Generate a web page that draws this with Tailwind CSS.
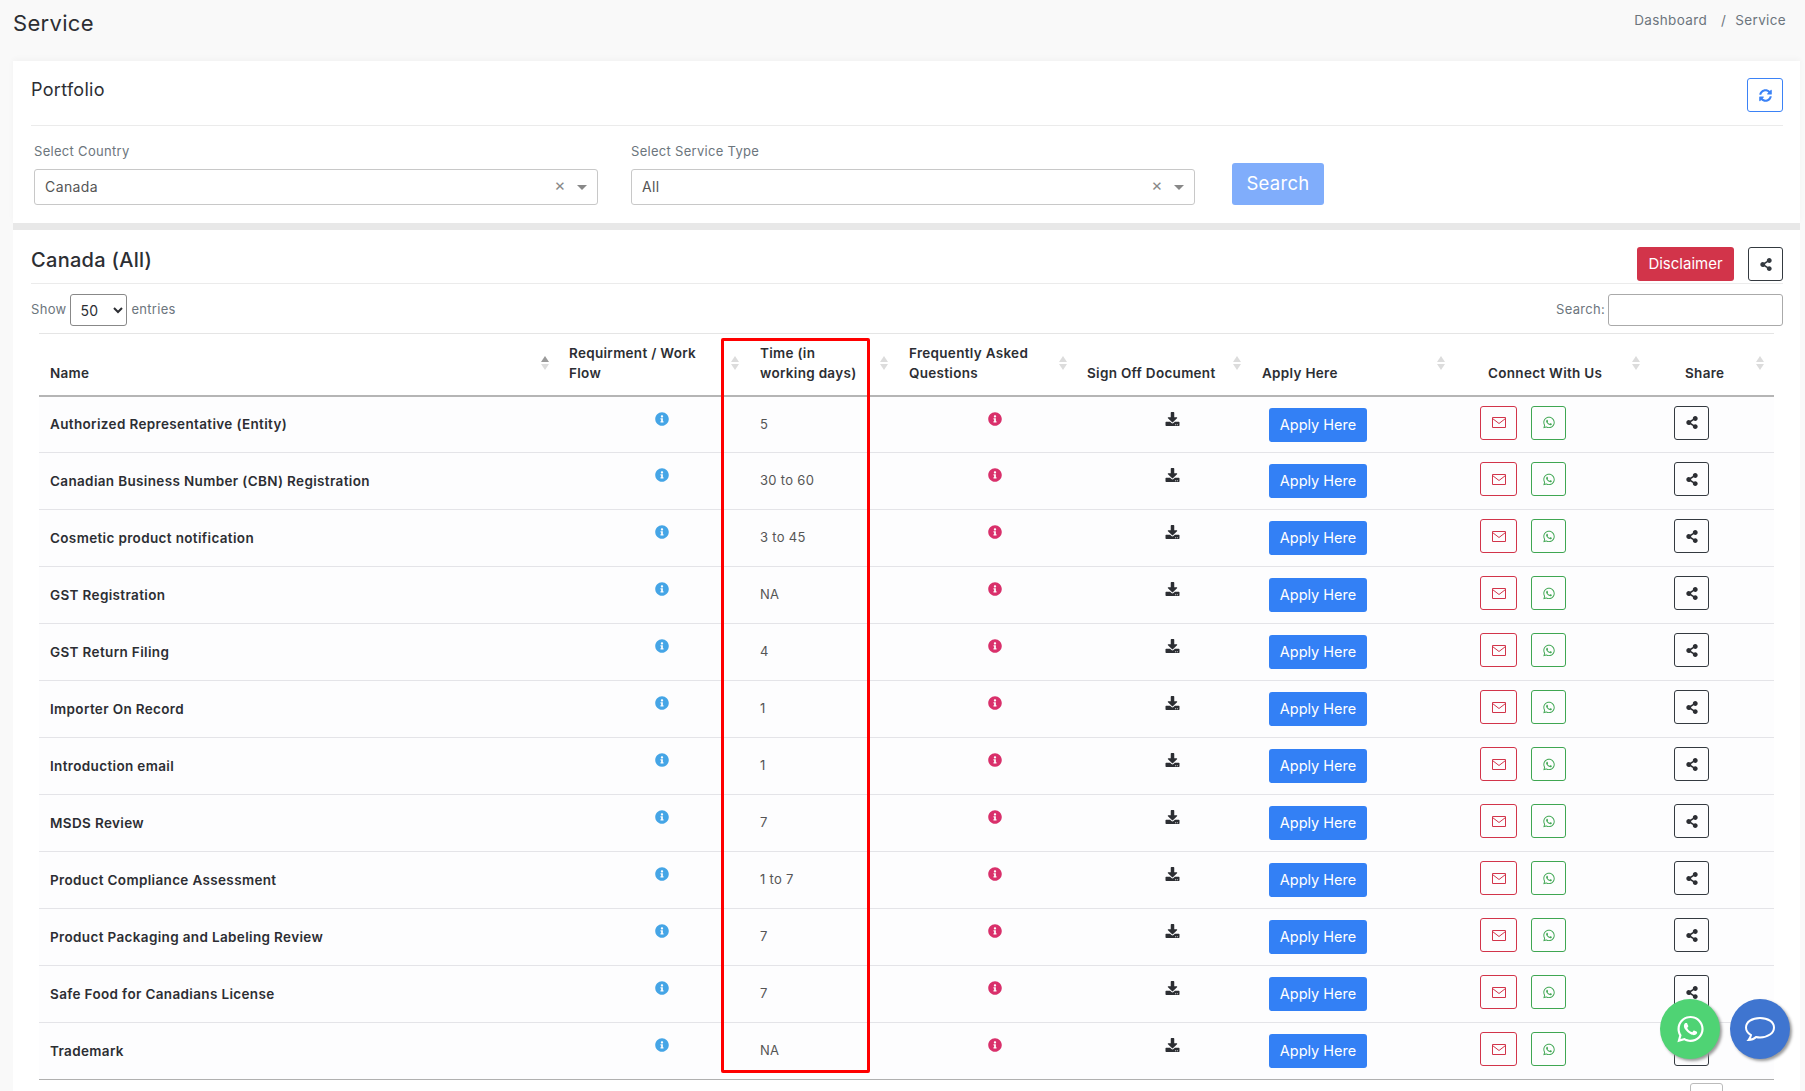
<!DOCTYPE html>
<html lang="en">
<head>
  <meta charset="UTF-8" />
  <title>Service</title>
  <script src="https://cdn.jsdelivr.net/npm/@tailwindcss/browser@4"></script>
</head>
<body class="bg-[#f9f9f9] h-screen overflow-hidden [font-family:Inter,sans-serif] text-[13px] tracking-[0.3px] text-[#2c2e33]">
  <div class="relative pl-[13px] pr-[5px] h-[1091px] overflow-hidden">

    <!-- page title -->
    <div class="flex justify-between h-[61px]">
      <h1 class="text-[22px] leading-[24px] pt-[11px] font-normal">Service</h1>
      <div class="flex pt-[11px] pr-[14px] leading-[18px] text-[13.5px] tracking-[0.35px] text-[#6c757d]">
        <span>Dashboard</span><span class="ml-[14px] mr-[9px]">/</span><span>Service</span>
      </div>
    </div>

    <!-- portfolio filter -->
    <section class="bg-white h-[162px] pl-[18px] pr-[17px] shadow-[0_-2px_6px_rgba(0,0,0,0.03)]">
      <div class="flex justify-between h-[65px] border-b border-[#ebebeb]">
        <h2 class="text-[18px] leading-[22px] pt-[18px]">Portfolio</h2>
        <button class="mt-[17px] w-[36px] h-[34px] border border-[#3b82f6] rounded-[3px] flex items-center justify-center">
          <svg class="w-[13px] h-[13px] fill-[#3b82f6]" viewBox="0 0 512 512"><path d="M370.72 133.28C339.458 104.008 298.888 87.962 255.848 88c-77.458.068-144.328 53.178-162.791 126.85-1.344 5.363-6.122 9.15-11.651 9.15H24.103c-7.498 0-13.194-6.807-11.807-14.176C33.933 94.924 134.813 8 256 8c66.448 0 126.791 26.136 171.315 68.685L463.03 40.97C478.149 25.851 504 36.559 504 57.941V192c0 13.255-10.745 24-24 24H345.941c-21.382 0-32.09-25.851-16.971-40.971l41.75-41.749zM32 296h134.059c21.382 0 32.09 25.851 16.971 40.971l-41.75 41.75c31.262 29.273 71.835 45.319 114.876 45.28 77.418-.07 144.315-53.144 162.787-126.849 1.344-5.363 6.122-9.15 11.651-9.15h57.304c7.498 0 13.194 6.807 11.807 14.176C478.067 417.076 377.187 504 256 504c-66.448 0-126.791-26.136-171.315-68.685L48.97 471.03C33.851 486.149 8 475.441 8 454.059V320c0-13.255 10.745-24 24-24z"/></svg>
        </button>
      </div>
      <div class="flex pl-[3px] pt-[16px]">
        <div class="w-[564px]">
          <label class="block leading-[18px] mb-[9px] text-[#6c757d]">Select Country</label>
          <div class="h-[36px] border border-[#c8c8c8] rounded-[3px] flex items-center pl-[10px] pr-[10px] pb-[2px] text-[14px] tracking-[0.4px] text-[#555]">
            <span class="flex-1">Canada</span>
            <span class="text-[17px] leading-[15px] text-[#888] mr-[11px] -mt-[2px]">×</span>
            <span class="w-0 h-0 mt-[2px] border-x-[5px] border-x-transparent border-t-[5px] border-t-[#888]"></span>
          </div>
        </div>
        <div class="w-[564px] ml-[33px]">
          <label class="block leading-[18px] mb-[9px] text-[#6c757d]">Select Service Type</label>
          <div class="h-[36px] border border-[#c8c8c8] rounded-[3px] flex items-center pl-[10px] pr-[10px] pb-[2px] text-[14px] tracking-[0.4px] text-[#555]">
            <span class="flex-1">All</span>
            <span class="text-[17px] leading-[15px] text-[#888] mr-[11px] -mt-[2px]">×</span>
            <span class="w-0 h-0 mt-[2px] border-x-[5px] border-x-transparent border-t-[5px] border-t-[#888]"></span>
          </div>
        </div>
        <button class="ml-[37px] mt-[21px] w-[92px] h-[42px] rounded-[3px] bg-[#80adfb] text-white text-[18.5px]">Search</button>
      </div>
    </section>

    <div class="h-[7px] bg-[#e8e8e8]"></div>

    <!-- results -->
    <section class="bg-white h-[900px] pl-[18px] pr-[17px]">
      <div class="flex justify-between h-[54px] border-b border-[#ebebeb]">
        <h2 class="text-[20px] leading-[24px] pt-[18px] font-medium">Canada (All)</h2>
        <div class="flex gap-[14px] pt-[17px]">
          <button class="w-[97px] h-[34px] rounded-[3px] bg-[#d2344a] text-white text-[15px] tracking-[0px]">Disclaimer</button>
          <button class="w-[35px] h-[34px] border border-[#343a40] rounded-[3px] flex items-center justify-center">
            <svg class="w-[12px] h-[13px] fill-[#343a40]" viewBox="0 0 448 512"><path d="M352 320c-22.608 0-43.387 7.819-59.79 20.895l-102.486-64.054a96.551 96.551 0 0 0 0-41.683l102.486-64.054C308.613 184.181 329.392 192 352 192c53.019 0 96-42.981 96-96S405.019 0 352 0s-96 42.981-96 96c0 7.158.79 14.13 2.276 20.841L155.79 180.895C139.387 167.819 118.608 160 96 160c-53.019 0-96 42.981-96 96s42.981 96 96 96c22.608 0 43.387-7.819 59.79-20.895l102.486 64.054A96.301 96.301 0 0 0 256 416c0 53.019 42.981 96 96 96s96-42.981 96-96-42.981-96-96-96z"/></svg>
          </button>
        </div>
      </div>

      <div class="flex justify-between items-start h-[49px] pt-[10px] text-[#6c757d]">
        <div class="flex items-center">
          <span>Show</span>
          <select class="ml-[4px] mr-[4px] w-[57px] h-[32px] border border-[#888] rounded-[3px] pl-[5px] text-[14px] text-[#2c2e33] bg-white"><option>50</option></select>
          <span>entries</span>
        </div>
        <div class="flex items-center">
          <span>Search:</span>
          <input class="ml-[3px] w-[175px] h-[32px] border border-[#aaa] rounded-[3px] bg-white" />
        </div>
      </div>

      <table class="ml-[8px] w-[1735px] table-fixed border-collapse border-t border-[#e5e5e5]">
        <colgroup>
          <col class="w-[520px]" /><col class="w-[190px]" /><col class="w-[149px]" /><col class="w-[179px]" />
          <col class="w-[174px]" /><col class="w-[204px]" /><col class="w-[195px]" /><col class="w-[124px]" />
        </colgroup>
        <thead>
          <tr class="h-[62px] border-b-2 border-[#b5b5b5] text-left text-[13.5px] leading-[20px] align-bottom">
            <th class="relative font-semibold pl-[11px] pb-[12px]">Name</th>
            <th class="relative font-semibold pl-[10px] pb-[12px]">Requirment / Work<br />Flow</th>
            <th class="relative font-semibold pl-[11px] pb-[12px]">Time (in<br />working days)</th>
            <th class="relative font-semibold pl-[11px] pb-[12px]">Frequently Asked<br />Questions</th>
            <th class="relative font-semibold pl-[10px] pb-[12px]">Sign Off Document</th>
            <th class="relative font-semibold pl-[11px] pb-[12px]">Apply Here</th>
            <th class="relative font-semibold pl-[33px] pb-[12px]">Connect With Us</th>
            <th class="relative font-semibold pl-[35px] pb-[12px]">Share</th>
          </tr>
        </thead>
        <tbody id="rows"></tbody>
      </table>

      <div class="flex justify-end mt-[3px] mr-[60px]">
        <div class="w-[33px] h-[30px] border border-[#bbb] rounded-[3px]"></div>
      </div>
    </section>

    <!-- red annotation round the time column -->
    <div class="absolute left-[721px] top-[338px] w-[149px] h-[735px] border-[3px] border-[#ff0000] rounded-[2px]"></div>

    <!-- floating buttons -->
    <div class="absolute left-[1660px] top-[999px] w-[60px] h-[60px] rounded-full bg-[#4fd374] shadow-[2px_2px_3px_#999] flex items-center justify-center">
      <svg class="w-[27px] h-[30px] fill-white" viewBox="0 0 448 512"><path d="M380.9 97.1C339 55.1 283.2 32 223.9 32c-122.4 0-222 99.6-222 222 0 39.1 10.2 77.3 29.6 111L0 480l117.7-30.9c32.4 17.7 68.9 27 106.1 27h.1c122.3 0 224.1-99.6 224.1-222 0-59.3-25.2-115-67.1-157zm-157 341.6c-33.2 0-65.7-8.9-94-25.7l-6.7-4-69.8 18.3L72 359.2l-4.4-7c-18.5-29.4-28.2-63.3-28.2-98.2 0-101.7 82.8-184.5 184.6-184.5 49.3 0 95.6 19.2 130.4 54.1 34.8 34.9 56.2 81.2 56.1 130.5 0 101.8-84.9 184.6-186.6 184.6zm101.2-138.2c-5.5-2.8-32.8-16.2-37.9-18-5.1-1.9-8.8-2.8-12.5 2.8-3.7 5.6-14.3 18-17.6 21.8-3.2 3.7-6.5 4.2-12 1.4-32.6-16.3-54-29.1-75.5-66-5.7-9.8 5.7-9.1 16.3-30.3 1.8-3.7.9-6.9-.5-9.7-1.4-2.8-12.5-30.1-17.1-41.2-4.5-10.8-9.1-9.3-12.5-9.5-3.2-.2-6.9-.2-10.6-.2-3.7 0-9.7 1.4-14.8 6.9-5.1 5.6-19.4 19-19.4 46.3 0 27.3 19.9 53.7 22.6 57.4 2.8 3.7 39.1 59.7 94.8 83.8 35.2 15.2 49 16.5 66.6 13.9 10.7-1.6 32.8-13.4 37.4-26.4 4.6-13 4.6-24.1 3.2-26.4-1.3-2.5-5-3.9-10.5-6.6z"/></svg>
    </div>
    <div class="absolute left-[1730px] top-[999px] w-[60px] h-[60px] rounded-full bg-[#3f75d0] shadow-[2px_2px_3px_#999] flex items-center justify-center">
      <svg class="w-[32px] h-[28px] fill-none stroke-white stroke-[2]" viewBox="0 0 32 28"><path d="M16 3C8 3 2 7 2 12.5c0 3 2 5.800 5 7.500-.300 2-1.300 3.500-2.500 5 3 0 5.500-1 7.500-3 1.300.300 2.700.500 4 .500 8 0 14-4.500 14-10S24 3 16 3z"/></svg>
    </div>
  </div>

  <script>
    const services = [
      ['Authorized Representative (Entity)', '5'],
      ['Canadian Business Number (CBN) Registration', '30 to 60'],
      ['Cosmetic product notification', '3 to 45'],
      ['GST Registration', 'NA'],
      ['GST Return Filing', '4'],
      ['Importer On Record', '1'],
      ['Introduction email', '1'],
      ['MSDS Review', '7'],
      ['Product Compliance Assessment', '1 to 7'],
      ['Product Packaging and Labeling Review', '7'],
      ['Safe Food for Canadians License', '7'],
      ['Trademark', 'NA']
    ];

    const infoPath = 'M256 8C119.043 8 8 119.083 8 256c0 136.997 111.043 248 248 248s248-111.003 248-248C504 119.083 392.957 8 256 8zm0 110c23.196 0 42 18.804 42 42s-18.804 42-42 42-42-18.804-42-42 18.804-42 42-42zm56 254c0 6.627-5.373 12-12 12h-88c-6.627 0-12-5.373-12-12v-24c0-6.627 5.373-12 12-12h12v-64h-12c-6.627 0-12-5.373-12-12v-24c0-6.627 5.373-12 12-12h64c6.627 0 12 5.373 12 12v100h12c6.627 0 12 5.373 12 12v24z';
    const downloadPath = 'M216 0h80c13.3 0 24 10.7 24 24v168h87.7c17.8 0 26.7 21.5 14.1 34.1L269.7 378.3c-7.5 7.5-19.8 7.5-27.3 0L90.1 226.1c-12.6-12.6-3.7-34.1 14.1-34.1H192V24c0-13.3 10.7-24 24-24zm296 376v112c0 13.3-10.7 24-24 24H24c-13.3 0-24-10.7-24-24V376c0-13.3 10.7-24 24-24h146.7l49 49c20.1 20.1 52.5 20.1 72.6 0l49-49H488c13.3 0 24 10.7 24 24zm-124 88c0-11-9-20-20-20s-20 9-20 20 9 20 20 20 20-9 20-20zm64 0c0-11-9-20-20-20s-20 9-20 20 9 20 20 20 20-9 20-20z';
    const sharePath = 'M352 320c-22.608 0-43.387 7.819-59.79 20.895l-102.486-64.054a96.551 96.551 0 0 0 0-41.683l102.486-64.054C308.613 184.181 329.392 192 352 192c53.019 0 96-42.981 96-96S405.019 0 352 0s-96 42.981-96 96c0 7.158.79 14.13 2.276 20.841L155.79 180.895C139.387 167.819 118.608 160 96 160c-53.019 0-96 42.981-96 96s42.981 96 96 96c22.608 0 43.387-7.819 59.79-20.895l102.486 64.054A96.301 96.301 0 0 0 256 416c0 53.019 42.981 96 96 96s96-42.981 96-96-42.981-96-96-96z';
    const waPath = 'M380.9 97.1C339 55.1 283.2 32 223.9 32c-122.4 0-222 99.6-222 222 0 39.1 10.2 77.3 29.6 111L0 480l117.7-30.9c32.4 17.7 68.9 27 106.1 27h.1c122.3 0 224.1-99.6 224.1-222 0-59.3-25.2-115-67.1-157zm-157 341.6c-33.2 0-65.7-8.9-94-25.7l-6.7-4-69.8 18.3L72 359.2l-4.4-7c-18.5-29.4-28.2-63.3-28.2-98.2 0-101.7 82.8-184.5 184.6-184.5 49.3 0 95.6 19.2 130.4 54.1 34.8 34.9 56.2 81.2 56.1 130.5 0 101.8-84.9 184.6-186.6 184.6zm101.2-138.2c-5.5-2.8-32.8-16.2-37.9-18-5.1-1.9-8.8-2.8-12.5 2.8-3.7 5.6-14.3 18-17.6 21.8-3.2 3.7-6.5 4.2-12 1.4-32.6-16.3-54-29.1-75.5-66-5.7-9.8 5.7-9.1 16.3-30.3 1.8-3.7.9-6.9-.5-9.7-1.4-2.8-12.5-30.1-17.1-41.2-4.5-10.8-9.1-9.3-12.5-9.5-3.2-.2-6.9-.2-10.6-.2-3.7 0-9.7 1.4-14.8 6.9-5.1 5.6-19.4 19-19.4 46.3 0 27.3 19.9 53.7 22.6 57.4 2.8 3.7 39.1 59.7 94.8 83.8 35.2 15.2 49 16.5 66.6 13.9 10.7-1.6 32.8-13.4 37.4-26.4 4.6-13 4.6-24.1 3.2-26.4-1.3-2.5-5-3.9-10.5-6.6z';

    document.getElementById('rows').innerHTML = services.map(([name, days]) => `
      <tr class="h-[57px] bg-[#fdfdfe] border-b border-[#e4e4e8] last:border-[#b0b0b0]">
        <td class="pl-[11px] font-semibold text-[13.5px] tracking-[0.35px]">${name}</td>
        <td class="align-top pl-[96px] pt-[15px]"><svg class="w-[14px] h-[14px] fill-[#45a5e6]" viewBox="0 0 512 512"><path d="${infoPath}"/></svg></td>
        <td class="pl-[11px] text-[#555]">${days}</td>
        <td class="align-top pl-[90px] pt-[15px]"><svg class="w-[14px] h-[14px] fill-[#d9306b]" viewBox="0 0 512 512"><path d="${infoPath}"/></svg></td>
        <td class="align-top pl-[88px] pt-[15px]"><svg class="w-[15px] h-[14px] fill-[#2c2e33]" viewBox="0 0 512 512"><path d="${downloadPath}"/></svg></td>
        <td class="align-top pl-[18px] pt-[11px]"><button class="w-[98px] h-[34px] rounded-[3px] bg-[#3380f5] text-white text-[14.5px] tracking-[0px]">Apply Here</button></td>
        <td class="align-top pl-[25px] pt-[9px]">
          <div class="flex gap-[14px]">
            <button class="w-[37px] h-[34px] border border-[#d2344a] rounded-[3px] flex items-center justify-center">
              <svg class="w-[14px] h-[11px] fill-none stroke-[#d2344a]" viewBox="0 0 14 11"><path d="M.5.5h13v10H.5zM.5 1.500 7 6.500l6.500-5"/></svg>
            </button>
            <button class="w-[35px] h-[34px] border border-[#3fa652] rounded-[3px] flex items-center justify-center">
              <svg class="w-[12px] h-[13px] fill-[#3fa652]" viewBox="0 0 448 512"><path d="${waPath}"/></svg>
            </button>
          </div>
        </td>
        <td class="align-top pl-[24px] pt-[9px]">
          <button class="w-[35px] h-[34px] border border-[#343a40] rounded-[3px] flex items-center justify-center">
            <svg class="w-[12px] h-[13px] fill-[#2c2e33]" viewBox="0 0 448 512"><path d="${sharePath}"/></svg>
          </button>
        </td>
      </tr>`).join('');

    // sort arrows on every header, first column is the active one
    document.querySelectorAll('thead th').forEach((th, i) => {
      th.insertAdjacentHTML('beforeend', `
        <span class="absolute right-[10px] top-[22px] flex flex-col gap-[2px]">
          <span class="w-0 h-0 border-x-[4px] border-x-transparent border-b-[6px] ${i === 0 ? 'border-b-[#9a9a9a]' : 'border-b-[#dcdcdc]'}"></span>
          <span class="w-0 h-0 border-x-[4px] border-x-transparent border-t-[6px] border-t-[#dcdcdc]"></span>
        </span>`);
    });
  </script>
</body>
</html>
